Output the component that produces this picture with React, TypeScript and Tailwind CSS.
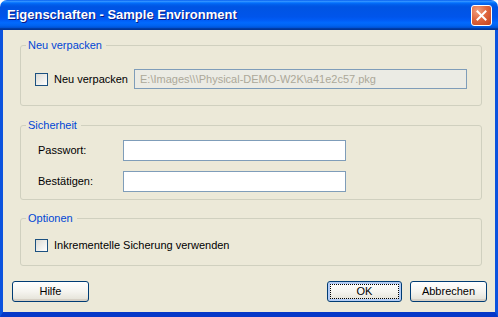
import type { ReactNode } from 'react';

const FONT = "font-['Liberation_Sans',Arial,sans-serif]";

function Checkbox() {
  return (
    <span className="block h-[13px] w-[13px] shrink-0 border border-[#1C5180] bg-gradient-to-br from-[#DCDBD4] to-white" />
  );
}

function Group({ title, className, children }: { title: string; className: string; children: ReactNode }) {
  return (
    <fieldset className={`rounded-[3px] border border-[#D0D0BF] ${className}`}>
      <legend className="ml-[5px] pl-[2px] pr-[4px] text-[11px] leading-[13px] text-[#0046D5]">{title}</legend>
      {children}
    </fieldset>
  );
}

function XpButton({ label, focused }: { label: string; focused?: boolean }) {
  return (
    <button
      type="button"
      className={`block h-[21px] w-full rounded-[3px] border border-[#003C74] bg-gradient-to-b from-white via-[#F5F4EF] to-[#E3E1D6] p-[2px] text-[11px] leading-[13px] text-black ${
        focused ? 'shadow-[inset_0_0_0_2px_#B4CCF4]' : 'shadow-[inset_0_-2px_0_#D6D0C5]'
      }`}
    >
      <span
        className={`flex h-full w-full items-center justify-center ${
          focused ? 'border border-dotted border-black' : ''
        }`}
      >
        {label}
      </span>
    </button>
  );
}

export default function App() {
  return (
    <div className={`flex h-[317px] w-[498px] flex-col overflow-hidden ${FONT}`}>
      <div className="flex h-[30px] shrink-0 items-center justify-between rounded-t-[7px] bg-[linear-gradient(180deg,#0058EE_0%,#3593FF_4%,#288EFF_6%,#127DFF_8%,#036FFC_10%,#0262EE_14%,#0057E5_20%,#0054E3_24%,#0055EB_56%,#005BF5_66%,#026AFE_76%,#0062EF_86%,#0052D6_92%,#0040AB_94%,#003092_100%)] pl-[7px] pr-[6px]">
        <span className="text-[13px] font-bold leading-[16px] text-white [text-shadow:1px_1px_0_#0A1883]">
          Eigenschaften - Sample Environment
        </span>
        <span className="flex h-[21px] w-[21px] items-center justify-center rounded-[3px] border border-white bg-[radial-gradient(circle_at_30%_25%,#F0A080_0%,#E06840_45%,#C4401C_100%)]">
          <svg width="11" height="11" viewBox="0 0 11 11">
            <path d="M1.5 1.5 L9.5 9.5 M9.5 1.5 L1.5 9.5" stroke="white" strokeWidth="2" strokeLinecap="square" />
          </svg>
        </span>
      </div>

      <div className="flex flex-1 border-x-[3px] border-b-[5px] border-x-[#0B53DE] border-b-[#0638C8]">
        <div className="flex flex-1 flex-col bg-[#ECE9D8] pl-[17px] pr-[13px] text-[11px] leading-[13px] text-black">
          <Group title="Neu verpacken" className="mt-[9px]">
            <div className="flex items-center pl-[14px] pt-[17px] pb-[16px]">
              <div className="flex w-[99px] items-center gap-[6px]">
                <Checkbox />
                <span>Neu verpacken</span>
              </div>
              <div className="flex h-[20px] w-[333px] items-center border border-[#7F9DB9] bg-[#EBEBE4] pl-[5px] text-[#ACA899]">
                {'E:\\Images\\\\\\Physical-DEMO-W2K\\a41e2c57.pkg'}
              </div>
            </div>
          </Group>

          <Group title="Sicherheit" className="mt-[13px]">
            <div className="flex flex-col gap-[10px] pl-[17px] pt-[8px] pb-[7px]">
              <div className="flex items-center">
                <span className="w-[85px]">Passwort:</span>
                <div className="h-[21px] w-[223px] border border-[#7F9DB9] bg-white" />
              </div>
              <div className="flex items-center">
                <span className="w-[85px]">Bestätigen:</span>
                <div className="h-[21px] w-[223px] border border-[#7F9DB9] bg-white" />
              </div>
            </div>
          </Group>

          <Group title="Optionen" className="mt-[12px]">
            <div className="flex items-center gap-[6px] pl-[14px] pt-[14px] pb-[13px]">
              <Checkbox />
              <span>Inkrementelle Sicherung verwenden</span>
            </div>
          </Group>

          <div className="-ml-[8px] -mr-[5px] mt-[15px] flex items-center">
            <div className="w-[77px]">
              <XpButton label="Hilfe" />
            </div>
            <div className="flex-1" />
            <div className="flex gap-[8px]">
              <div className="w-[75px]">
                <XpButton label="OK" focused />
              </div>
              <div className="w-[77px]">
                <XpButton label="Abbrechen" />
              </div>
            </div>
          </div>
        </div>
      </div>
    </div>
  );
}
